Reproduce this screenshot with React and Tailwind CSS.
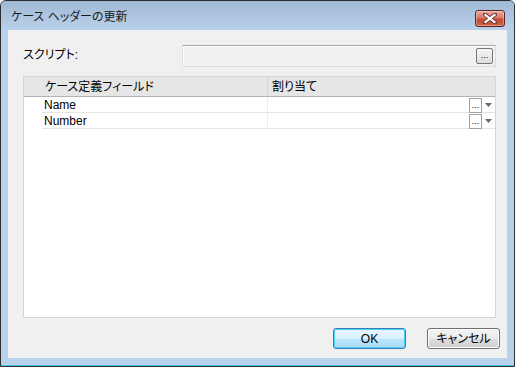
import React from "react";

const rows = ["Name", "Number"];

function CloseButton() {
  return (
    <div className="flex h-[17px] w-[30px] items-center justify-center rounded-[3px] border border-[#5a2424] bg-[linear-gradient(180deg,#e9a99b_0%,#d8786a_45%,#c64a35_55%,#d0603f_100%)] shadow-[inset_0_0_0_1px_rgba(255,255,255,0.35)]">
      <svg width="14" height="11" viewBox="0 0 14 11">
        <path d="M2 1.5 L12 9.5 M12 1.5 L2 9.5" stroke="#6e3a33" strokeWidth="4" strokeLinecap="square" />
        <path d="M2.5 2 L11.5 9 M11.5 2 L2.5 9" stroke="#ffffff" strokeWidth="2.2" strokeLinecap="square" />
      </svg>
    </div>
  );
}

function SmallDots({ className }) {
  return (
    <div className={"flex items-end justify-center pb-[2px] text-[9px] leading-none text-black " + className}>
      ...
    </div>
  );
}

export default function App() {
  return (
    <div className="h-[367px] w-[515px] bg-[#f0f0f0] font-['Liberation_Sans','Noto_Sans_CJK_JP',sans-serif] text-[12px] text-black [font-feature-settings:'palt']">
      <div className="flex h-full w-full flex-col rounded-t-[6px] border border-[#2e2e2e] bg-[#b9d1ea] shadow-[inset_0_-1px_0_#45c6dc]">
        {/* barre de titre */}
        <div className="flex h-[29px] shrink-0 items-start justify-between rounded-t-[5px] bg-[linear-gradient(180deg,#9fb8d5_0%,#adc5e0_50%,#bad1ea_100%)] pl-[10px] pr-[9px]">
          <span className="mt-[8px] text-[12px] leading-[16px] text-[#1b1b1b]">ケース ヘッダーの更新</span>
          <div className="mt-[9px]">
            <CloseButton />
          </div>
        </div>

        {/* zone client */}
        <div className="mx-[7px] mb-[8px] flex flex-1 flex-col bg-[#f0f0f0] pl-[15px] pr-[7px] pt-[15px]">
          {/* Script */}
          <div className="mr-[4px] flex h-[22px] items-center">
            <span className="w-[159px] pb-[3px] leading-none">スクリプト:</span>
            <div className="flex h-[22px] flex-1 items-center justify-end border border-[#dcdcdc] border-t-[#a5a5a5] bg-[#f0f0f0] pr-[2px] shadow-[inset_1px_1px_0_#ffffff]">
              <div className="flex h-[16px] w-[17px] items-end justify-center rounded-[2px] border border-[#777777] bg-[linear-gradient(180deg,#f6f6f6,#dddddd)] pb-[3px] text-[9px] leading-none">
                ...
              </div>
            </div>
          </div>

          {/* Grille */}
          <div className="mr-[4px] mt-[9px] flex h-[242px] flex-col border border-[#d5d5d5] bg-white">
            <div className="flex h-[20px] shrink-0 items-center border-b border-[#b4b4b4] bg-[#e6e6e6]">
              <span className="w-[243px] pl-[21px] leading-none">ケース定義フィールド</span>
              <div className="h-full w-px bg-[#d8d8d8]" />
              <span className="pl-[4px] leading-none">割り当て</span>
            </div>
            {rows.map((r) => (
              <div key={r} className="flex h-[16px] items-stretch pl-[18px]">
                <div className="flex flex-1 items-stretch border-b border-[#e4e4e4]">
                  <span className="flex w-[225px] items-center pl-[2px] leading-none">{r}</span>
                  <div className="w-px bg-[#ececec]" />
                  <div className="flex-1" />
                  <SmallDots className="my-[1px] h-[15px] w-[13px] border border-[#a0a0a0] bg-white" />
                  <div className="flex w-[13px] items-center justify-center">
                    <svg width="7" height="4" viewBox="0 0 7 4">
                      <path d="M0 0 H7 L3.5 4 Z" fill="#6a6a6a" />
                    </svg>
                  </div>
                </div>
              </div>
            ))}
          </div>

          {/* Boutons */}
          <div className="mt-[10px] flex justify-end gap-[21px]">
            <button className="flex h-[21px] w-[73px] items-center justify-center rounded-[3px] border border-[#3c7fb1] bg-[linear-gradient(180deg,#eaf6fd_0%,#d9f0fc_50%,#bee6fd_51%,#a7d9f5_100%)] leading-none shadow-[inset_0_0_0_1px_#48d0f8]">
              OK
            </button>
            <button className="flex h-[21px] w-[73px] items-center justify-center rounded-[3px] border border-[#707070] bg-[linear-gradient(180deg,#f2f2f2_0%,#ebebeb_50%,#dddddd_51%,#cfcfcf_100%)] leading-none shadow-[inset_0_0_0_1px_#fcfcfc]">
              キャンセル
            </button>
          </div>
        </div>
      </div>
    </div>
  );
}
